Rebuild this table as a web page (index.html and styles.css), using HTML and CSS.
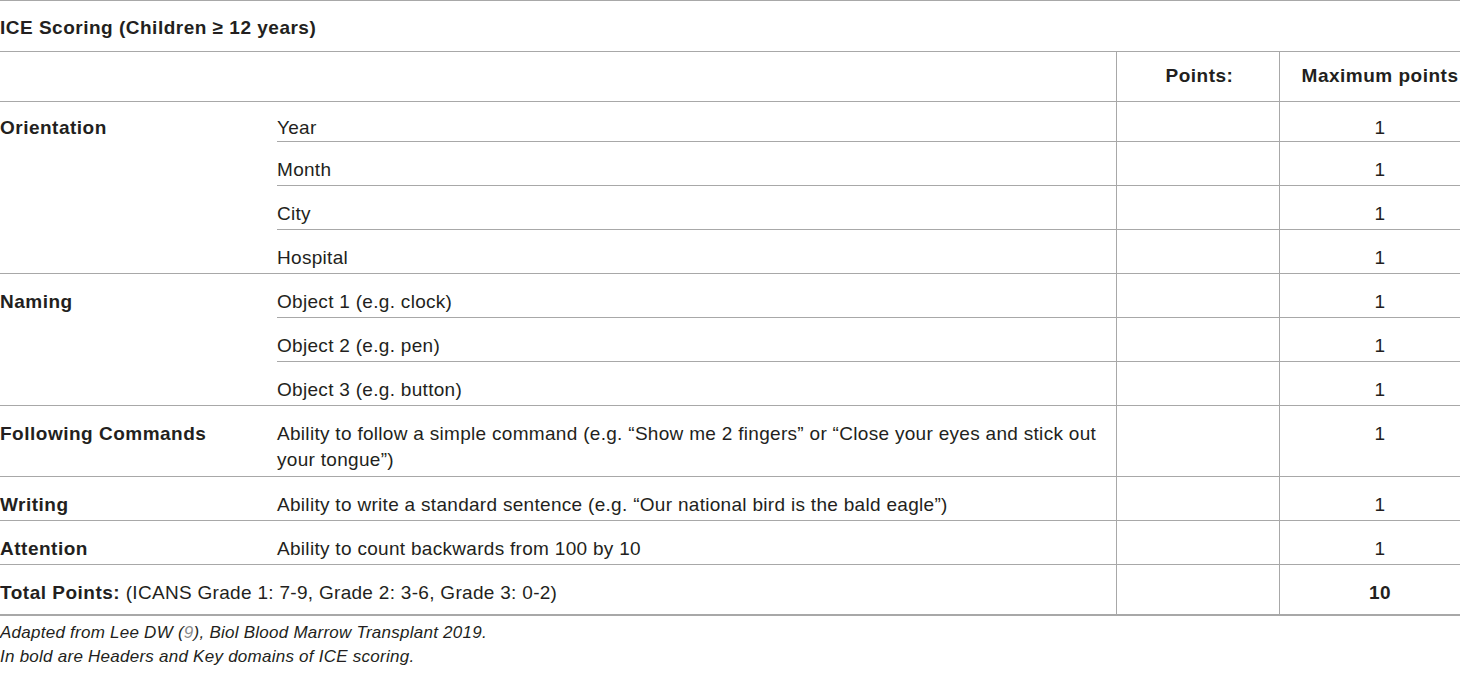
FILE: index.html
```html
<!DOCTYPE html>
<html lang="en">
<head>
<meta charset="utf-8">
<title>ICE Scoring</title>
<link rel="stylesheet" href="styles.css">
</head>
<body>
<table class="ice">
  <colgroup>
    <col class="c1"><col class="c2"><col class="c3"><col class="c4">
  </colgroup>
  <thead>
    <tr class="title-row"><th colspan="4" class="title">ICE Scoring (Children ≥ 12 years)</th></tr>
    <tr class="head-row">
      <th class="h"></th><th class="h"></th><th class="h num">Points:</th><th class="h max">Maximum points</th>
    </tr>
  </thead>
  <tbody>
    <tr class="first">
      <td rowspan="4" class="dom first-dom">Orientation</td><td>Year</td><td class="num"></td><td class="max">1</td>
    </tr>
    <tr><td>Month</td><td class="num"></td><td class="max">1</td></tr>
    <tr><td>City</td><td class="num"></td><td class="max">1</td></tr>
    <tr><td>Hospital</td><td class="num"></td><td class="max">1</td></tr>
    <tr>
      <td rowspan="3" class="dom">Naming</td><td>Object 1 (e.g. clock)</td><td class="num"></td><td class="max">1</td>
    </tr>
    <tr><td>Object 2 (e.g. pen)</td><td class="num"></td><td class="max">1</td></tr>
    <tr><td>Object 3 (e.g. button)</td><td class="num"></td><td class="max">1</td></tr>
    <tr class="tall">
      <td class="dom">Following Commands</td><td class="wrap">Ability to follow a simple command (e.g. “Show me 2 fingers” or “Close your eyes and stick out your tongue”)</td><td class="num"></td><td class="max">1</td>
    </tr>
    <tr><td class="dom">Writing</td><td>Ability to write a standard sentence (e.g. “Our national bird is the bald eagle”)</td><td class="num"></td><td class="max">1</td></tr>
    <tr><td class="dom">Attention</td><td>Ability to count backwards from 100 by 10</td><td class="num"></td><td class="max">1</td></tr>
    <tr class="total">
      <td colspan="2" class="plain"><b class="bold">Total Points:</b> (ICANS Grade 1: 7-9, Grade 2: 3-6, Grade 3: 0-2)</td><td class="num"></td><td class="max"><b class="bold">10</b></td>
    </tr>
  </tbody>
</table>
<div class="notes">
  <p>Adapted from Lee DW (<span class="ref">9</span>), Biol Blood Marrow Transplant 2019.</p>
  <p>In bold are Headers and Key domains of ICE scoring.</p>
</div>
</body>
</html>
```
FILE: styles.css
```css
html, body {
  margin: 0;
  padding: 0;
  background: #ffffff;
}
body {
  font-family: "Liberation Sans", Arial, sans-serif;
  color: #231f20;
}
.ice {
  width: 1460px;
  table-layout: fixed;
  border-collapse: separate;
  border-spacing: 0;
  font-size: 19px;
  line-height: 26px;
  letter-spacing: 0.3px;
}
.c1 { width: 277px; }
.c2 { width: 839px; }
.c3 { width: 163px; }
.c4 { width: 181px; }

.ice th, .ice td {
  padding: 15px 0 2px 0;
  vertical-align: top;
  text-align: left;
  border-bottom: 1px solid #a8a8a8;
  font-weight: normal;
}
.ice th,
.ice .dom,
.ice .bold {
  font-weight: bold;
  letter-spacing: 0.5px;
}
.ice .title {
  border-top: 1px solid #a8a8a8;
  padding: 14px 0 10px 0;
  height: 26px;
}
.ice .h {
  padding: 11px 0 12px 0;
  height: 26px;
}
.ice .first td { padding-top: 13px; padding-bottom: 0; }
.ice .first-dom { padding-top: 13px; }
.ice .total td { padding-bottom: 8px; border-bottom-width: 2px; }
.ice .tall td { padding-bottom: 3px; }
.ice .num {
  border-left: 1px solid #a8a8a8;
  text-align: center;
  padding-left: 3px;
}
.ice .max {
  border-left: 1px solid #a8a8a8;
  text-align: center;
  padding-left: 20px;
}
.ice .wrap { padding-right: 8px; }
.notes {
  margin-top: 5px;
  font-size: 17px;
  line-height: 24px;
  letter-spacing: 0.25px;
  font-style: italic;
}
.notes p { margin: 0; }
.ref { color: #8a8a8a; }
```
